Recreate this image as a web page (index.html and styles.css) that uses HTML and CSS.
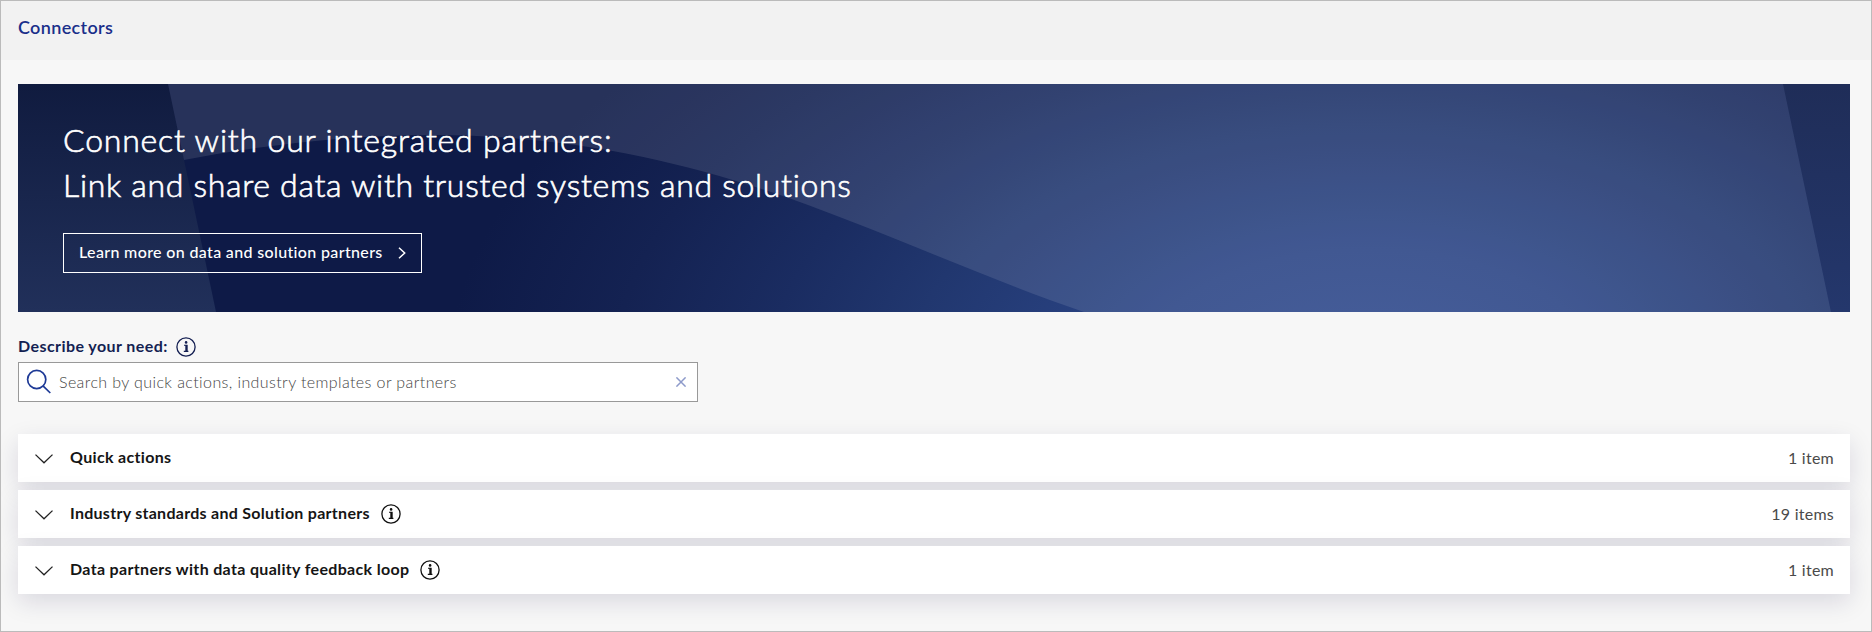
FILE: index.html
```html
<!DOCTYPE html>
<html lang="en">
<head>
<meta charset="utf-8">
<title>Connectors</title>
<link rel="stylesheet" href="styles.css">
</head>
<body>
<svg class="defs" width="0" height="0" aria-hidden="true">
  <symbol id="info" viewBox="0 0 20 20">
    <circle cx="10" cy="10" r="9.1" fill="none" stroke="currentColor" stroke-width="1.3"/>
    <path d="M8 8.2h3v5.9M7.8 14.4h4.6" fill="none" stroke="currentColor" stroke-width="1.1"/>
    <path d="M10.3 8v6.4" stroke="currentColor" stroke-width="2"/>
    <circle cx="10.1" cy="5.4" r="1.3" fill="currentColor"/>
  </symbol>
  <symbol id="chevron" viewBox="0 0 18 10">
    <path d="M.5.6 9 8.8 17.5.6" fill="none" stroke="currentColor" stroke-width="1.3"/>
  </symbol>
</svg>
<div class="page">
  <header class="header"><h1 class="header-title">Connectors</h1></header>
  <main class="content">
    <section class="banner">
      <svg class="banner-art" viewBox="0 0 1832 228" preserveAspectRatio="none" aria-hidden="true">
        <defs>
          <radialGradient id="glow" gradientUnits="userSpaceOnUse" cx="0" cy="0" r="1" gradientTransform="translate(1350 290) scale(920 500)">
            <stop offset="0" stop-color="#304b90"/>
            <stop offset=".25" stop-color="#2b4586"/>
            <stop offset=".5" stop-color="#21376f"/>
            <stop offset=".65" stop-color="#1a2c61"/>
            <stop offset=".82" stop-color="#142252"/>
            <stop offset="1" stop-color="#0e1a47"/>
          </radialGradient>
          <linearGradient id="left" x1="0" y1="0" x2="0" y2="1">
            <stop offset="0" stop-color="#101b3f"/>
            <stop offset="1" stop-color="#21305a"/>
          </linearGradient>
          <linearGradient id="right" x1="0" y1="0" x2="0" y2="1">
            <stop offset="0" stop-color="#1f2d58"/>
            <stop offset="1" stop-color="#24376c"/>
          </linearGradient>
        </defs>
        <rect width="1832" height="228" fill="url(#glow)"/>
        <path d="M0 0H150L198 228H0Z" fill="url(#left)"/>
        <path d="M1765 0H1832V228H1813Z" fill="url(#right)"/>
        <path d="M150 0H1765L1813 228H1066C970 195 880 154 790 121C680 81 560 51 415 51C330 51 245 61 166 76Z" fill="#fff" fill-opacity=".105"/>
      </svg>
      <h2 class="banner-title"><span class="line-one">Connect with our integrated partners:</span><span class="line-two">Link and share data with trusted systems and solutions</span></h2>
      <a class="banner-button"><span>Learn more on data and solution partners</span>
        <svg width="8" height="12" viewBox="0 0 8 12"><path d="M1 .7 6.7 6 1 11.3" fill="none" stroke="currentColor" stroke-width="1.5"/></svg>
      </a>
    </section>
    <div class="need"><span class="need-label">Describe your need:</span><svg class="info"><use href="#info"/></svg></div>
    <div class="search">
      <svg class="search-icon" width="26" height="26" viewBox="0 0 26 26"><circle cx="10.7" cy="10.5" r="9.1"/><path d="M17 16.8 24.3 24"/></svg>
      <input class="search-input" type="text" placeholder="Search by quick actions, industry templates or partners">
      <svg class="clear" width="10" height="10" viewBox="0 0 10 10"><path d="M.4.4 9.6 9.6M9.6.4.4 9.6"/></svg>
    </div>
    <div class="cards">
      <section class="card">
        <svg class="chevron"><use href="#chevron"/></svg>
        <h3 class="card-title">Quick actions</h3>
        <span class="count">1 item</span>
      </section>
      <section class="card">
        <svg class="chevron"><use href="#chevron"/></svg>
        <h3 class="card-title tight">Industry standards and Solution partners</h3>
        <svg class="info"><use href="#info"/></svg>
        <span class="count">19 items</span>
      </section>
      <section class="card">
        <svg class="chevron"><use href="#chevron"/></svg>
        <h3 class="card-title">Data partners with data quality feedback loop</h3>
        <svg class="info"><use href="#info"/></svg>
        <span class="count">1 item</span>
      </section>
    </div>
  </main>
</div>
</body>
</html>
```
FILE: styles.css
```css
* { box-sizing: border-box; }
body { margin: 0; font-family: Lato, "Open Sans", sans-serif; font-size: 16px; }
h1, h2, h3 { margin: 0; }
svg { display: block; flex: none; }
.defs { position: absolute; }
.page { height: 632px; border: 1px solid #bbb; background: #f7f7f7; overflow: hidden; }
.header { height: 59px; padding: 14px 17px; background: #f2f2f2; }
.header-title { font-size: 18px; font-weight: 600; line-height: 24px; letter-spacing: .35px; color: #1a2f8a; }
.content { padding: 24px 21px 0 17px; }

.banner { position: relative; height: 228px; padding: 33px 45px 0; color: #fff; }
.banner-art { position: absolute; inset: 0; width: 100%; height: 100%; }
.banner-title { position: relative; display: flex; flex-direction: column; font-size: 32px; font-weight: 300; line-height: 45px; -webkit-text-stroke: .65px #fff; }
.line-one { letter-spacing: .81px; }
.line-two { letter-spacing: .69px; }
.banner-button { position: relative; display: flex; justify-content: space-between; align-items: center; width: 359px; height: 40px; margin-top: 26px; padding: 0 15px 0 15px; border: 1px solid #fff; font-weight: 500; letter-spacing: .35px; }
.banner-button span { padding-bottom: 4px; }

.need { display: flex; align-items: center; height: 20px; margin-top: 25px; color: #141f52; }
.need-label { width: 158px; padding-bottom: 4px; font-weight: 700; letter-spacing: .42px; }
.info { width: 20px; height: 20px; }

.search { display: flex; align-items: center; width: 680px; height: 40px; margin-top: 5px; padding: 0 11px 0 7px; border: 1px solid #999; background: #fff; }
.search-icon { fill: none; stroke: #1e3a96; stroke-width: 1.7; }
.search-input { flex: 1; height: 38px; margin-left: 7px; padding: 0; border: 0; outline: 0; background: none; font: 300 16px/38px Lato, "Open Sans", sans-serif; letter-spacing: .4px; color: #222; }
.search-input::placeholder { color: #444; opacity: 1; }
.clear { fill: none; stroke: #8d9aca; stroke-width: 1.5; }

.cards { display: flex; flex-direction: column; gap: 8px; margin-top: 32px; }
.card { display: flex; align-items: center; height: 48px; padding: 0 16px 0 17px; background: #fff; box-shadow: 0 8px 24px rgba(20, 15, 70, .13); }
.chevron { width: 18px; height: 10px; margin: 1px 17px 0 0; color: #222; }
.card-title { padding: 0 11px 4px 0; font-size: 16px; font-weight: 700; letter-spacing: .33px; color: #151515; }
.card-title.tight { letter-spacing: .28px; }
.card .info { color: #111; }
.count { margin-left: auto; padding-bottom: 2px; letter-spacing: .25px; color: #4a4a4a; }
```
